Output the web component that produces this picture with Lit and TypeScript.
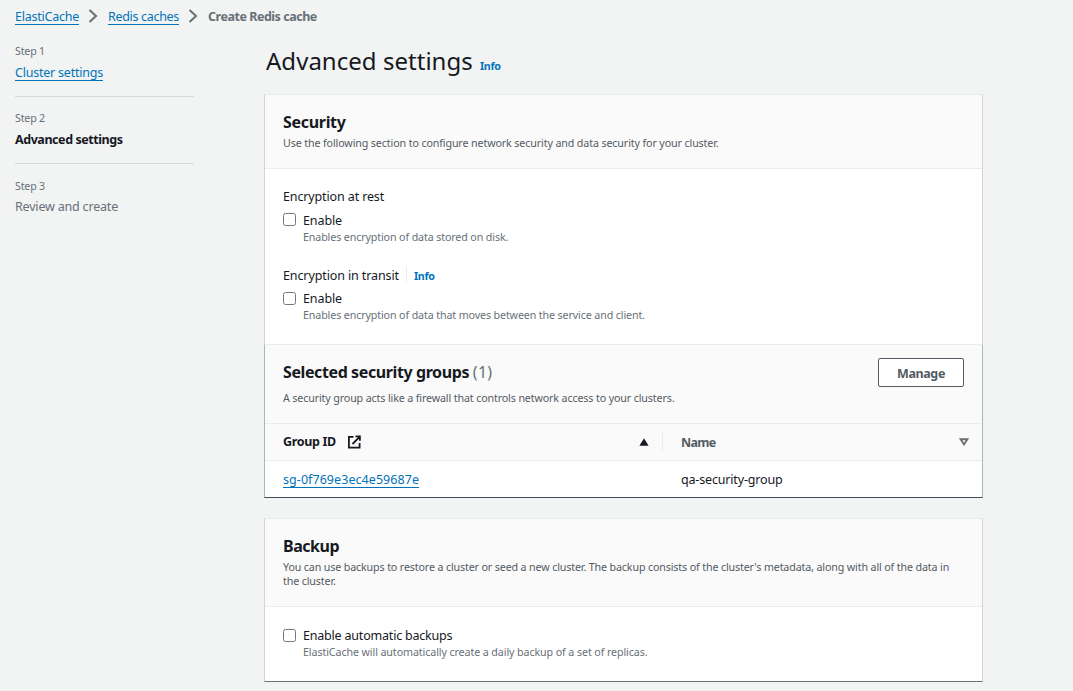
import { LitElement, html, css } from "lit";
import { customElement } from "lit/decorators.js";

@customElement("app-root")
export class AppRoot extends LitElement {
  static styles = css`
    * { box-sizing: border-box; margin: 0; padding: 0; }
    :host {
      display: block;
      height: 691px;
      overflow: hidden;
      background: #f2f3f3;
      color: #16191f;
      font: 400 12.5px/20px "Noto Sans", sans-serif;
      white-space: nowrap;
    }
    svg { display: block; flex: none; }
    a {
      color: #0073bb;
      text-decoration: underline;
      text-decoration-thickness: 1px;
      text-underline-offset: 3px;
      text-decoration-skip-ink: none;
    }
    .crumbs { display: flex; align-items: center; height: 26px; padding: 7px 0 0 15px; }
    .crumbs svg { margin: -1px 10px 0 9px; }
    .current { color: #687078; font-weight: 700; letter-spacing: -0.47px; }
    .ls-a { letter-spacing: -0.24px; }
    .ls-b { letter-spacing: -0.31px; }
    .ls-c { letter-spacing: -0.22px; }
    .ls-id { letter-spacing: 0.06px; }
    .layout { display: flex; }
    .steps { width: 179px; margin-left: 15px; list-style: none; padding-top: 15px; }
    .step { height: 67px; }
    .step.ruled { border-bottom: 1px solid #d5dbdb; height: 56px; margin-bottom: 11px; }
    .step-no { color: #687078; font-size: 10.7px; letter-spacing: -0.2px; line-height: 20px; height: 22px; }
    .step.last { padding-top: 1px; }
    .step.last .step-no { height: 21px; }
    .active { font-weight: 700; letter-spacing: -0.44px; }
    .todo { color: #687078; letter-spacing: -0.19px; }
    .main { margin-left: 70px; width: 719px; }
    .title { display: flex; align-items: baseline; height: 68px; padding: 19px 0 0 2px; }
    h1 { font-size: 24px; font-weight: 400; line-height: 32px; width: 214px; letter-spacing: 0.03px; }
    .info { color: #0073bb; font-size: 10.7px; font-weight: 700; letter-spacing: -0.3px; }
    .card {
      border: 1px solid #d0d5d5;
      border-top-color: #eaeded;
      background: #fff;
    }
    .head { background: #fafafa; border-bottom: 1px solid #eaeded; padding: 0 18px; }
    h2 { font-size: 16px; font-weight: 700; line-height: 22px; height: 22px; }
    .desc { font-size: 10.7px; line-height: 14px; color: #545b64; letter-spacing: -0.12px; }
    .security { border-bottom: 0; height: 250px; }
    .security .head { height: 74px; padding-top: 16px; }
    .security h2 { letter-spacing: -0.31px; }
    .security .desc { margin-top: 3px; }
    .fields { padding: 18px 18px 0; }
    .label { display: flex; align-items: center; letter-spacing: -0.13px; height: 20px; }
    .label.second { margin-top: 22px; letter-spacing: -0.11px; }
    .label .info { border-left: 1px solid #eaeded; height: 16px; line-height: 18px; margin: 0 0 2px 7px; padding-left: 7px; }
    .check { display: flex; margin-top: 4px; }
    .second + .check { margin-top: 3px; }
    .box {
      flex: none; width: 13px; height: 13px; margin: 2px 7px 0 0;
      border: 1px solid #767676; border-radius: 2.5px; background: #fff;
    }
    .second + .check .box { margin-top: 3px; }
    .check-label { letter-spacing: -0.1px; height: 19px; }
    .hint { font-size: 10.7px; line-height: 14px; height: 14px; color: #687078; letter-spacing: -0.125px; }
    .groups { border-color: #eaeded #aab7b8 #414d5c #aab7b8; height: 154px; }
    .groups .head { display: flex; justify-content: space-between; height: 79px; padding-top: 16px; }
    .groups h2 { letter-spacing: -0.4px; }
    .count { color: #687078; font-weight: 400; letter-spacing: 0.3px; }
    .groups .desc { margin-top: 8px; letter-spacing: -0.132px; }
    .manage {
      width: 86px; height: 29px; margin-top: -3px; border: 1px solid #545b64; border-radius: 2px;
      background: #fff; color: #545b64; font: 700 12.5px/28px "Noto Sans", sans-serif;
      letter-spacing: -0.38px; text-align: center; padding-top: 1px;
    }
    .row { display: grid; grid-template-columns: 398px 1fr; height: 36px; align-items: center; padding-top: 1px; }
    .row.th { height: 37px; background: #fafafa; border-bottom: 1px solid #eaeded; font-weight: 700; padding-top: 0; }
    .cell { display: flex; align-items: center; padding: 0 18px; height: 20px; }
    .th .cell svg:last-child { margin-left: auto; }
    .th .cell:first-child { padding-right: 13px; border-right: 1px solid #eaeded; letter-spacing: -0.33px; }
    .th .cell:last-child { color: #545b64; letter-spacing: -0.7px; padding-right: 13px; }
    .th .cell:last-child span { padding-top: 1px; }
    .external { margin-left: 12px; }
    .qa { letter-spacing: -0.17px; }
    .backup { margin-top: 20px; height: 164px; border-bottom-color: #687078; }
    .backup .head { height: 88px; padding-top: 16px; }
    .backup h2 { letter-spacing: -0.48px; }
    .backup .desc { margin-top: 3px; letter-spacing: -0.137px; }
    .backup .fields { padding-top: 14px; }
    .backup .box { margin-top: 4px; }
    .backup .check-label { letter-spacing: -0.2px; padding-top: 1px; height: 20px; }
    .backup .hint { letter-spacing: -0.1px; }
  `;

  private chevron() {
    return html`<svg width="10" height="16" viewBox="0 0 10 16" fill="none" stroke="#687078" stroke-width="2"><path d="M1.5 2 8 8 1.5 14" /></svg>`;
  }

  private checkbox(label: string, hint: string) {
    return html`<label class="check">
      <span class="box"></span>
      <div><div class="check-label">${label}</div><div class="hint">${hint}</div></div>
    </label>`;
  }

  render() {
    return html`
      <nav class="crumbs">
        <a class="ls-a">ElastiCache</a>${this.chevron()}<a class="ls-b">Redis caches</a>${this.chevron()}<span class="current">Create Redis cache</span>
      </nav>
      <div class="layout">
        <ol class="steps">
          <li class="step ruled"><div class="step-no">Step 1</div><a class="ls-c">Cluster settings</a></li>
          <li class="step ruled"><div class="step-no">Step 2</div><div class="active">Advanced settings</div></li>
          <li class="step last"><div class="step-no">Step 3</div><div class="todo">Review and create</div></li>
        </ol>
        <main class="main">
          <div class="title"><h1>Advanced settings</h1><span class="info">Info</span></div>
          <section class="card security">
            <div class="head">
              <h2>Security</h2>
              <p class="desc">Use the following section to configure network security and data security for your cluster.</p>
            </div>
            <div class="fields">
              <div class="label">Encryption at rest</div>
              ${this.checkbox("Enable", "Enables encryption of data stored on disk.")}
              <div class="label second">Encryption in transit<span class="info">Info</span></div>
              ${this.checkbox("Enable", "Enables encryption of data that moves between the service and client.")}
            </div>
          </section>
          <section class="card groups">
            <div class="head">
              <div>
                <h2>Selected security groups <span class="count">(1)</span></h2>
                <p class="desc">A security group acts like a firewall that controls network access to your clusters.</p>
              </div>
              <button class="manage">Manage</button>
            </div>
            <div class="row th">
              <div class="cell">
                <span>Group ID</span>
                <svg class="external" width="13" height="14" viewBox="0 0 13 14" fill="none" stroke="#16191f" stroke-width="1.8"><path d="M5.5 1.9H.9v10.7h10.7V8M7.5 1.4h4.4v4.4M11.8 1.6 4.5 9" /></svg>
                <svg width="10" height="8" viewBox="0 0 10 8" fill="#16191f"><path d="M5 .3 9.6 7.7H.4z" /></svg>
              </div>
              <div class="cell">
                <span>Name</span>
                <svg width="10" height="8" viewBox="0 0 10 8" fill="none" stroke="#687078" stroke-width="1.9"><path d="M1.6 1.2h6.8L5 6.4z" /></svg>
              </div>
            </div>
            <div class="row">
              <div class="cell"><a class="ls-id">sg-0f769e3ec4e59687e</a></div>
              <div class="cell qa">qa-security-group</div>
            </div>
          </section>
          <section class="card backup">
            <div class="head">
              <h2>Backup</h2>
              <p class="desc">You can use backups to restore a cluster or seed a new cluster. The backup consists of the cluster's metadata, along with all of the data in<br />the cluster.</p>
            </div>
            <div class="fields">
              ${this.checkbox("Enable automatic backups", "ElastiCache will automatically create a daily backup of a set of replicas.")}
            </div>
          </section>
        </main>
      </div>
    `;
  }
}
